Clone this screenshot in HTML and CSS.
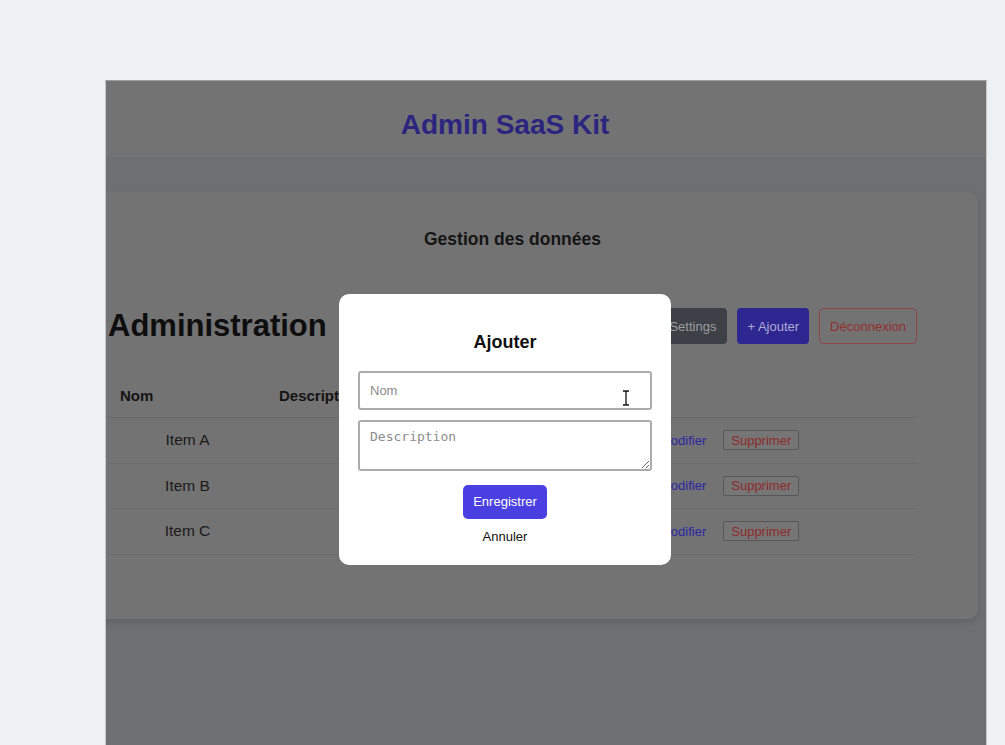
FILE: index.html
```html
<!DOCTYPE html>
<html lang="fr">
<head>
	<meta charset="UTF-8">
	<meta name="viewport" content="width=device-width, initial-scale=1.0">
	<title>Admin SaaS Kit</title>
	<link rel="stylesheet" href="styles.css">
</head>
<body>
	<div class="screen">
		<div class="app">
			<header class="topbar">
				<h1 class="brand">Admin SaaS Kit</h1>
			</header>

			<main class="main">
				<section class="card">
					<h2 class="card-title">Gestion des données</h2>

					<div class="toolbar">
						<h1 class="page-title">Administration</h1>
						<div class="actions">
							<button class="btn btn-dark">Settings</button>
							<button class="btn btn-primary">+ Ajouter</button>
							<button class="btn btn-outline">Déconnexion</button>
						</div>
					</div>

					<table class="data">
						<colgroup>
							<col class="c-name">
							<col class="c-desc">
							<col>
						</colgroup>
						<thead>
							<tr><th>Nom</th><th>Description</th><th></th></tr>
						</thead>
						<tbody>
							<tr>
								<td>Item A</td><td></td>
								<td class="row-actions"><a class="link">Modifier</a><button class="btn-del">Supprimer</button></td>
							</tr>
							<tr>
								<td>Item B</td><td></td>
								<td class="row-actions"><a class="link">Modifier</a><button class="btn-del">Supprimer</button></td>
							</tr>
							<tr>
								<td>Item C</td><td></td>
								<td class="row-actions"><a class="link">Modifier</a><button class="btn-del">Supprimer</button></td>
							</tr>
						</tbody>
					</table>
				</section>
			</main>

			<!-- modal "Ajouter" -->
			<div class="backdrop">
				<form class="modal">
					<h3 class="modal-title">Ajouter</h3>
					<div class="field">
						<input class="input" type="text" placeholder="Nom">
						<svg class="cursor" width="10" height="16" viewBox="0 0 10 16">
							<path d="M2 1h2.2L5 1.8 5.8 1H8M5 1.8v12.4M2 15h2.2L5 14.2l.8.8H8" fill="none" stroke="#111" stroke-width="1.3"/>
						</svg>
					</div>
					<textarea class="textarea" placeholder="Description"></textarea>
					<button class="btn-save" type="button">Enregistrer</button>
					<button class="btn-cancel" type="button">Annuler</button>
				</form>
			</div>
		</div>
	</div>
</body>
</html>
```

FILE: styles.css
```css
html, body{
	margin:0;
	height:100%;
	overflow:hidden;
	background-color:#edf1f4;
	font-family:"Liberation Sans", Arial, Helvetica, sans-serif;
}

/* recorded window */
.screen{
	width:882px;
	height:697px;
	margin:80px 0 0 105px;
	box-sizing:border-box;
	border:1px solid #c6c9cc;
	border-top-color:#9c9d9f;
	border-bottom:none;
	overflow:hidden;
	background-color:#6e6f71;
}
.app{
	position:relative;
	width:964px;
	height:100%;
	margin-left:-83px;
}

.topbar{
	height:76px;
	box-sizing:border-box;
	padding-top:11px;
	background-color:#737373;
	display:flex;
	align-items:center;
	justify-content:center;
}
.brand{
	margin:0;
	font-size:28px;
	color:#2b2580;
}

.main{
	padding:35px 9px 0;
}
.card{
	background-color:#737373;
	border-radius:10px;
	box-shadow:0 3px 6px rgba(0,0,0,0.12);
	padding:37px 61px 64px 76px;
}
.card-title{
	margin:0;
	font-size:17.5px;
	line-height:20px;
	text-align:center;
	color:#151515;
}

.toolbar{
	margin-top:58px;
	height:38px;
	display:flex;
	align-items:center;
	justify-content:space-between;
}
.page-title{
	margin:0;
	font-size:31px;
	line-height:38px;
	color:#0e0e0e;
}
.actions{
	display:flex;
	gap:10px;
}
.btn{
	height:36px;
	padding:0 10px;
	border:1px solid transparent;
	border-radius:4px;
	font-family:inherit;
	font-size:13px;
}
.btn-dark{ background-color:#3d4046; color:#9c9ea2; }
.btn-primary{ background-color:#2e2691; color:#aeabd6; padding:0 9px; }
.btn-outline{ background-color:transparent; border-color:#8c4646; color:#932f2f; }

.data{
	width:100%;
	margin-top:30px;
	border-collapse:collapse;
	color:#1a1a1a;
}
.c-name{ width:159px; }
.c-desc{ width:381px; }
.data th{
	padding:11px 12px;
	line-height:20px;
	font-size:15px;
	text-align:left;
	color:#141414;
	border-bottom:1px solid #686868;
}
.data td{
	padding:12px;
	line-height:20px;
	font-size:15.5px;
	text-align:center;
	border-bottom:1px solid #6c6c6c;
}
.data td.row-actions{
	text-align:left;
	font-size:13px;
}
.link{
	color:#2b26a2;
	margin-right:17px;
}
.btn-del{
	height:20px;
	padding:0 7px;
	background-color:#767676;
	border:1px solid #575757;
	border-radius:2px;
	font-family:inherit;
	font-size:13px;
	color:#8e2a2a;
}

/* modal */
.backdrop{
	position:absolute;
	inset:0;
	display:flex;
	align-items:center;
	justify-content:center;
}
.modal{
	width:332px;
	box-sizing:border-box;
	padding:20px 19px;
	background-color:#fff;
	border-radius:10px;
	display:flex;
	flex-direction:column;
	align-items:center;
}
.modal-title{
	margin:17px 0 18px;
	font-size:18px;
	line-height:22px;
	color:#111;
}
.field{
	position:relative;
	width:100%;
}
.input, .textarea{
	display:block;
	width:100%;
	box-sizing:border-box;
	border:2px solid #ababab;
	border-radius:3px;
	padding:0 10px;
	font-size:13px;
	color:#222;
}
.input{
	height:39px;
	font-family:inherit;
}
.textarea{
	height:51px;
	margin-top:10px;
	padding-top:7px;
	font-family:"DejaVu Sans Mono", "Liberation Mono", monospace;
}
.input::placeholder, .textarea::placeholder{ color:#8c8c8c; }
.cursor{
	position:absolute;
	left:263px;
	top:19px;
}
.btn-save{
	margin-top:14px;
	height:34px;
	padding:0 10px;
	border:none;
	border-radius:5px;
	background-color:#4a40e2;
	color:#fff;
	font-family:inherit;
	font-size:13px;
}
.btn-cancel{
	margin-top:10px;
	padding:0;
	border:none;
	background:none;
	line-height:16px;
	font-family:inherit;
	font-size:13px;
	color:#111;
}
```
